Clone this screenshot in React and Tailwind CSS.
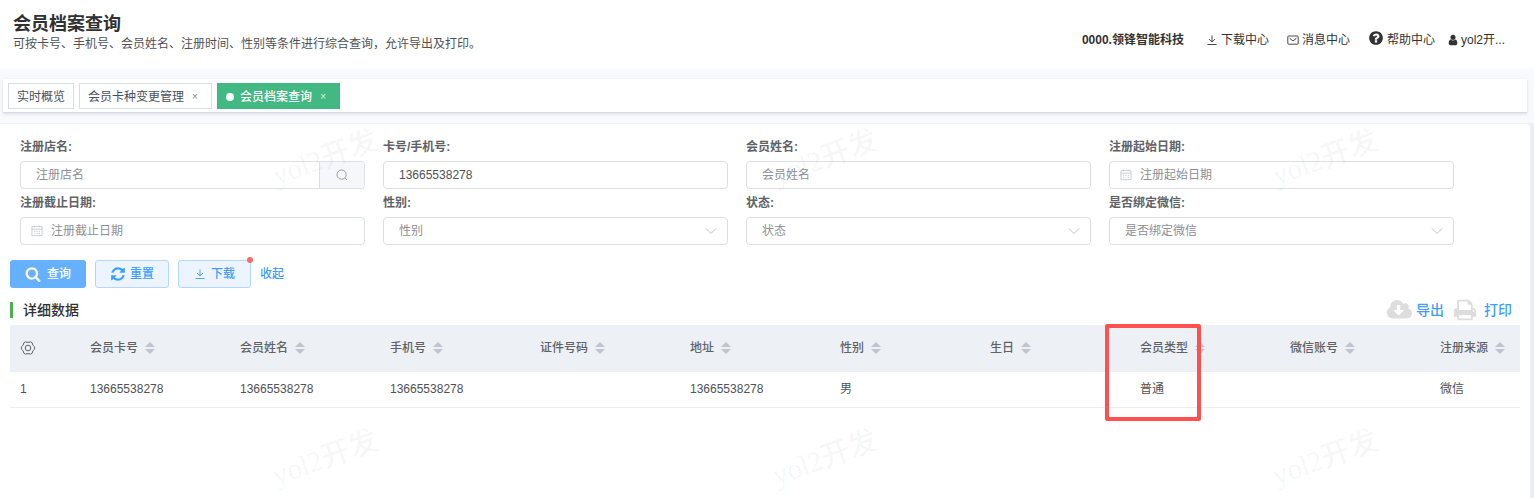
import { useState } from "react";

const columns = ["会员卡号", "会员姓名", "手机号", "证件号码", "地址", "性别", "生日", "会员类型", "微信账号", "注册来源"];

const rows = [
  ["13665538278", "13665538278", "13665538278", "", "13665538278", "男", "", "普通", "", "微信"],
];

const fields = [
  { id: "shop", label: "注册店名", type: "search" },
  { id: "card", label: "卡号/手机号", type: "text", value: "13665538278" },
  { id: "name", label: "会员姓名", type: "text" },
  { id: "start", label: "注册起始日期", type: "date" },
  { id: "end", label: "注册截止日期", type: "date" },
  { id: "sex", label: "性别", type: "select" },
  { id: "state", label: "状态", type: "select" },
  { id: "wechat", label: "是否绑定微信", type: "select" },
];

const paths = {
  search: "M1216 832q0-185-131.5-316.5t-316.5-131.5-316.5 131.5-131.5 316.5 131.5 316.5 316.5 131.5 316.5-131.5 131.5-316.5zm512 832q0 52-38 90t-90 38q-54 0-90-38l-343-342q-179 124-399 124-143 0-273.5-55.5t-225-150-150-225-55.5-273.5 55.5-273.5 150-225 225-150 273.5-55.5 273.5 55.5 225 150 150 225 55.5 273.5q0 220-124 399l343 343q37 37 37 90z",
  refresh: "M1639 1056q0 5-1 7-64 268-268 434.5t-478 166.5q-146 0-282.5-55t-243.5-157l-129 129q-19 19-45 19t-45-19-19-45v-448q0-26 19-45t45-19h448q26 0 45 19t19 45-19 45l-137 137q71 66 161 102t187 36q134 0 250-65t186-179q11-17 53-117 8-23 30-23h192q13 0 22.5 9.5t9.5 22.5zm25-800v448q0 26-19 45t-45 19h-448q-26 0-45-19t-19-45 19-45l138-138q-148-137-349-137-134 0-250 65t-186 179q-11 17-53 117-8 23-30 23h-199q-13 0-22.5-9.5t-9.5-22.5v-7q65-268 270-434.5t480-166.5q146 0 284 55.5t245 156.5l130-129q19-19 45-19t45 19 19 45z",
  print: "M448 1536h896v-256h-896v256zm0-640h896v-384h-160q-40 0-68-28t-28-68v-160h-640v640zm1152 64q0-26-19-45t-45-19-45 19-19 45 19 45 45 19 45-19 19-45zm128 0v416q0 13-9.5 22.5t-22.5 9.5h-224v160q0 40-28 68t-68 28h-960q-40 0-68-28t-28-68v-160h-224q-13 0-22.5-9.5t-9.5-22.5v-416q0-79 56.5-135.5t135.5-56.5h64v-544q0-40 28-68t68-28h672q40 0 88 20t76 48l152 152q28 28 48 76t20 88v256h64q79 0 135.5 56.5t56.5 135.5z",
  help: "M1024 1376v-192q0-14-9-23t-23-9h-192q-14 0-23 9t-9 23v192q0 14 9 23t23 9h192q14 0 23-9t9-23zm256-672q0-88-55.5-163t-138.5-116-170-41q-243 0-371 213-15 24 8 42l132 100q7 6 19 6 16 0 25-12 53-68 86-92 34-24 86-24 48 0 85.5 26t37.5 59q0 38-20 61t-68 45q-63 28-115.5 86.5t-52.5 125.5v36q0 14 9 23t23 9h192q14 0 23-9t9-23q0-19 21.5-49.5t54.5-49.5q32-18 49-28.5t46-35 44.5-48 28-60.5 12.5-81zm384 192q0 209-103 385.5t-279.5 279.5-385.5 103-385.5-103-279.5-279.5-103-385.5 103-385.5 279.5-279.5 385.5-103 385.5 103 279.5 279.5 103 385.5z",
  user: "M1536 1399q0 109-62.5 187t-150.5 78h-854q-88 0-150.5-78t-62.5-187q0-85 8.5-160.5t31.5-152 58.5-131 94-89 134.5-34.5q131 128 313 128t313-128q76 0 134.5 34.5t94 89 58.5 131 31.5 152 8.5 160.5zm-256-887q0 159-112.5 271.5t-271.5 112.5-271.5-112.5-112.5-271.5 112.5-271.5 271.5-112.5 271.5 112.5 112.5 271.5z",
  cloud: "M1344 928q0-14-9-23t-23-9h-224v-352q0-13-9.5-22.5t-22.5-9.5h-192q-13 0-22.5 9.5t-9.5 22.5v352h-224q-13 0-22.5 9.5t-9.5 22.5q0 14 9 23l352 352q9 9 23 9t23-9l351-351q10-12 10-24zm640 224q0 159-112.5 271.5t-271.5 112.5h-1088q-185 0-316.5-131.5t-131.5-316.5q0-130 70-240t188-165q-2-30-2-43 0-212 150-362t362-150q156 0 285.5 87t188.5 231q71-62 166-62 106 0 181 75t75 181q0 76-41 138 130 31 213.5 135.5t83.5 238.5z",
};

function Icon({ name, box = "0 0 1792 1792", className }) {
  return (
    <svg viewBox={box} fill="currentColor" className={`shrink-0 ${className}`} aria-hidden="true">
      <path d={paths[name]} />
    </svg>
  );
}

function DownloadIcon() {
  return (
    <svg viewBox="0 0 12 12" fill="none" stroke="currentColor" strokeWidth="0.9" className="w-3 h-3 shrink-0" aria-hidden="true">
      <path d="M6 1.5v6.3M3 5l3 3 3-3M1.5 10.5h9" />
    </svg>
  );
}

function MailIcon() {
  return (
    <svg viewBox="0 0 12 12" fill="none" stroke="currentColor" strokeWidth="0.9" className="w-3 h-3 shrink-0" aria-hidden="true">
      <rect x="0.8" y="2" width="10.4" height="8.2" rx="0.8" />
      <path d="M2.5 4.2L6 7l3.5-2.8" />
    </svg>
  );
}

function CalendarIcon() {
  return (
    <svg viewBox="0 0 12 12" fill="none" stroke="currentColor" strokeWidth="0.8" className="w-3 h-3 shrink-0 text-[#c0c4cc]" aria-hidden="true">
      <path d="M0.9 1.6h10.2v9H0.9zM0.9 4.2h10.2M3.3 0.6v1.8M8.7 0.6v1.8" />
      <path d="M3 6.4h6M3 8.6h6" strokeDasharray="1.2 1.2" />
    </svg>
  );
}

function GearIcon() {
  return (
    <svg viewBox="0 0 16 16" fill="none" stroke="currentColor" className="w-4 h-4" aria-hidden="true">
      <path d="M5.6 1.8Q8 3.2 10.4 1.8L12.2 2.8Q12.2 5.4 14.6 6.9V9.1Q12.2 10.6 12.2 13.2L10.4 14.2Q8 12.8 5.6 14.2L3.8 13.2Q3.8 10.6 1.4 9.1V6.9Q3.8 5.4 3.8 2.8z" strokeLinejoin="round" />
      <circle cx="8" cy="8" r="2.8" />
    </svg>
  );
}

function SortIcon() {
  return (
    <svg viewBox="0 0 10 12" fill="#c0c4cc" className="w-[10px] h-3 shrink-0" aria-hidden="true">
      <path d="M5 0l5 5H0zM5 12L0 7h10z" />
    </svg>
  );
}

const box = "w-full h-7 border border-[#dcdfe6] rounded bg-white text-xs placeholder:text-[#8d9096] outline-none";

function Field({ field }) {
  const [value, setValue] = useState(field.value || "");
  const onChange = (e) => setValue(e.target.value);

  return (
    <div>
      <label htmlFor={field.id} className="block h-7 leading-7 font-semibold text-[#606266]">{field.label}:</label>
      {field.type === "text" && (
        <input id={field.id} value={value} onChange={onChange} placeholder={field.label} className={`${box} px-[15px] text-[#505256]`} />
      )}
      {field.type === "search" && (
        <div className="flex h-7 border border-[#dcdfe6] rounded overflow-hidden">
          <input id={field.id} value={value} onChange={onChange} placeholder={field.label} className="flex-1 min-w-0 px-[15px] placeholder:text-[#8d9096] outline-none" />
          <button aria-label="搜索" className="w-[45px] flex items-center justify-center border-l border-[#dcdfe6] bg-[#f5f7fa] text-[#909399]">
            <svg viewBox="0 0 12 12" fill="none" stroke="currentColor" strokeWidth="0.9" className="w-3 h-3">
              <circle cx="5.6" cy="5.6" r="4.6" />
              <path d="M9 9l2 2" />
            </svg>
          </button>
        </div>
      )}
      {field.type === "date" && (
        <div className="relative">
          <span className="absolute left-[11px] top-2"><CalendarIcon /></span>
          <input id={field.id} value={value} onChange={onChange} placeholder={field.label} className={`${box} pl-[30px] pr-[15px]`} />
        </div>
      )}
      {field.type === "select" && (
        <div className="relative">
          <select id={field.id} value={value} onChange={onChange} className={`${box} px-[15px] appearance-none text-[#8d9096]`}>
            <option value="">{field.label}</option>
          </select>
          <svg viewBox="0 0 12 12" fill="none" stroke="#c0c4cc" className="absolute right-[11px] top-2 w-3 h-3 pointer-events-none" aria-hidden="true">
            <path d="M1 3.5l5 5 5-5" />
          </svg>
        </div>
      )}
    </div>
  );
}

function Watermark({ className }) {
  return (
    <span className={`absolute w-28 h-9 leading-9 text-[29px] font-medium text-black/5 whitespace-nowrap -rotate-20 pointer-events-none font-['Liberation_Serif','Noto_Sans_CJK_SC',serif] ${className}`}>
      yol2开发
    </span>
  );
}

export default function App() {
  return (
    <div className="relative min-h-screen flex flex-col overflow-hidden bg-[#f8f9fc] text-xs text-[#606266] font-['Liberation_Sans','Noto_Sans_CJK_SC',sans-serif]">
      <header className="h-[69px] bg-white flex justify-between pl-[13px] pr-[29px]">
        <div className="pt-3">
          <h1 className="text-lg leading-6 font-semibold text-[#303133]">会员档案查询</h1>
          <p className="leading-4 text-[#505256]">可按卡号、手机号、会员姓名、注册时间、性别等条件进行综合查询，允许导出及打印。</p>
        </div>
        <nav className="flex items-center pt-[10px] text-[#333]">
          <span className="font-bold mr-[22px]">0000.领锋智能科技</span>
          <a href="#download" className="flex items-center gap-[3px] mr-[18px]"><DownloadIcon />下载中心</a>
          <a href="#message" className="flex items-center gap-[3px] mr-[18px]"><MailIcon />消息中心</a>
          <a href="#help" className="flex items-center gap-[3px] mr-3"><Icon name="help" className="w-4 h-4 mb-1" />帮助中心</a>
          <a href="#user" className="flex items-center gap-[2px]"><Icon name="user" className="w-3 h-3" />yol2开...</a>
        </nav>
      </header>

      <div className="mt-[10px] ml-[3px] mr-[7px] h-[34px] px-[5px] flex items-center gap-[5px] bg-white border-b border-[#d8dce5] shadow-[0_1px_3px_rgba(0,0,0,0.12)] text-[#495060]">
        <button className="h-[26px] px-2 pt-[2px] border border-[#d8dce5] flex items-center">实时概览</button>
        <button className="h-[26px] px-2 pt-[2px] border border-[#d8dce5] flex items-center">
          会员卡种变更管理<span className="w-4 ml-[3px] text-[10px] text-[#808695]">×</span>
        </button>
        <button className="h-[26px] px-[9px] pt-[2px] bg-[#42b983] text-white font-medium flex items-center">
          <span className="w-2 h-2 mr-[6px] rounded-full bg-white" />
          会员档案查询<span className="w-4 ml-[3px] text-[10px] font-normal text-white/80">×</span>
        </button>
      </div>

      <div className="mt-[10px] pr-1 flex-1 flex flex-col bg-[#eceef3]">
        <main className="flex-1 bg-white border-t border-[#ebeef5] rounded-tr">
          <form className="grid grid-cols-4 gap-x-[18px] pl-5 pr-[76px] pt-[9px]" onSubmit={(e) => e.preventDefault()}>
            {fields.map((f) => <Field key={f.id} field={f} />)}
          </form>

          <div className="flex mt-[15px] ml-[10px] gap-[9px] font-medium text-[#409eff]">
            <button className="h-7 px-[15px] rounded-[3px] bg-[#66b1ff] text-white flex items-center gap-[6px]">
              <Icon name="search" className="w-4 h-4" />查询
            </button>
            <button className="h-7 px-[14px] rounded-[3px] border border-[#b3d8ff] bg-[#ecf5ff] flex items-center gap-1">
              <Icon name="refresh" className="w-4 h-4" />重置
            </button>
            <button className="relative h-7 px-[15px] rounded-[3px] border border-[#b3d8ff] bg-[#ecf5ff] flex items-center gap-[5px]">
              <DownloadIcon />下载
              <span className="absolute -right-[3px] -top-1 w-[6px] h-[6px] rounded-full bg-[#f56c6c]" />
            </button>
            <button>收起</button>
          </div>

          <div className="flex items-center justify-between h-[37px] pl-[10px] pr-[18px] pt-[7px]">
            <h2 className="h-4 leading-4 pl-[10px] border-l-3 border-[#4caf50] text-sm font-medium text-[#303133]">详细数据</h2>
            <div className="flex items-center text-sm font-medium text-[#409eff]">
              <button className="flex items-center gap-1 mr-[9px]">
                <Icon name="cloud" box="0 0 1984 1792" className="w-[26px] h-6 text-[#ddd]" />导出
              </button>
              <button className="flex items-center gap-[7px]">
                <Icon name="print" className="w-6 h-6 text-[#ddd]" />打印
              </button>
            </div>
          </div>

          <div className="relative mx-[10px]">
            <table className="w-full table-fixed">
              <thead>
                <tr className="h-[46px] bg-[#edf0f5] border-b border-[#ebeef5]">
                  <th className="w-[70px] pl-[10px] text-left"><GearIcon /></th>
                  {columns.map((c) => (
                    <th key={c} className="w-[150px] pl-[10px] font-medium last:w-[90px]">
                      <span className="flex items-center gap-[7px] whitespace-nowrap">{c}<SortIcon /></span>
                    </th>
                  ))}
                </tr>
              </thead>
              <tbody>
                {rows.map((row, i) => (
                  <tr key={i} className="h-9 border-b border-[#ebeef5] text-[#505256]">
                    <td className="pl-[10px]">{i + 1}</td>
                    {row.map((cell, j) => <td key={j} className="pl-[10px]">{cell}</td>)}
                  </tr>
                ))}
              </tbody>
            </table>
            {/* highlight round the member type column */}
            <div className="absolute left-[1095px] -top-px w-24 h-[97px] border-4 border-[#ff5050] rounded-xs pointer-events-none" />
          </div>
        </main>
      </div>

      <Watermark className="left-[270px] top-[139px]" />
      <Watermark className="left-[770px] top-[139px]" />
      <Watermark className="left-[1270px] top-[139px]" />
      <Watermark className="left-[270px] top-[439px]" />
      <Watermark className="left-[770px] top-[439px]" />
      <Watermark className="left-[1270px] top-[439px]" />
    </div>
  );
}
